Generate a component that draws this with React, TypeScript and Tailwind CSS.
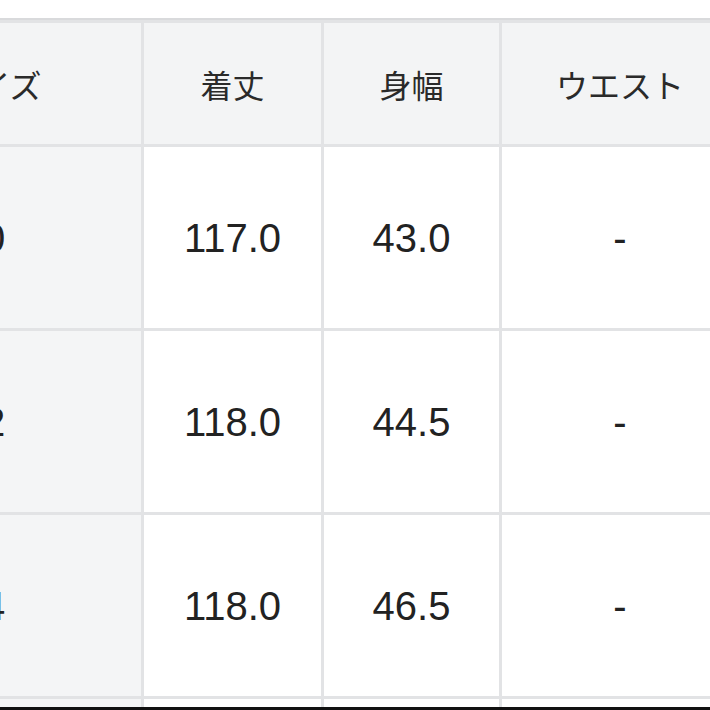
const headers = ['サイズ', '着丈', '身幅', 'ウエスト']

const rows = [
  ['0', '117.0', '43.0', '-'],
  ['2', '118.0', '44.5', '-'],
  ['4', '118.0', '46.5', '-'],
  ['6', '119.0', '48.5', '-'],
]

export default function App() {
  return (
    <div className="w-[710px] h-[710px] bg-white overflow-hidden flex flex-col">
      <div className="h-[18px] shrink-0" />
      <div className="flex-1 overflow-hidden">
        <div
          className="ml-[-153px] w-[890px] grid grid-cols-[294px_177px_175px_236px] gap-[3px] bg-[#e2e3e5] border-t-[2px] border-[#d9dadc] pt-[3px]"
          style={{ fontFamily: '"Liberation Sans", Arial, "Noto Sans CJK JP", sans-serif' }}
        >
          {headers.map((h) => (
            <div
              key={h}
              className="h-[121px] bg-[#f3f4f5] flex items-center justify-center text-[32px] text-[#2a2a2a]"
              style={{ fontFamily: '"Noto Sans CJK JP", "Noto Sans", sans-serif' }}
            >
              {h}
            </div>
          ))}
          {rows.map((row, i) =>
            row.map((cell, j) => (
              <div
                key={`${i}-${j}`}
                className={`h-[181px] flex items-center justify-center text-[40px] text-[#222222] ${
                  j === 0 ? 'bg-[#f4f5f6]' : 'bg-white'
                }`}
              >
                {cell}
              </div>
            ))
          )}
        </div>
      </div>
      <div className="h-[3px] shrink-0 bg-[#111111]" />
    </div>
  )
}
